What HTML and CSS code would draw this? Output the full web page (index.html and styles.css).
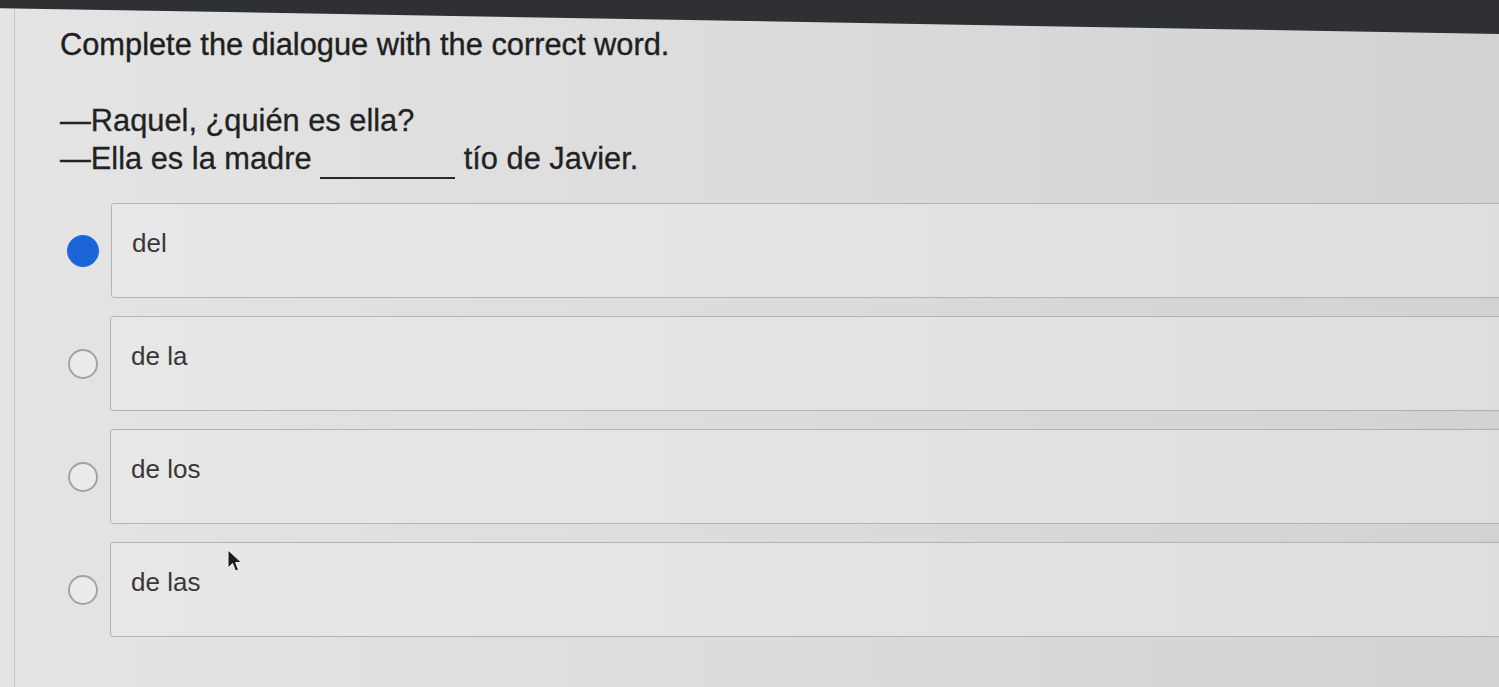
FILE: index.html
```html
<!DOCTYPE html>
<html lang="en">

<head>
    <meta charset="UTF-8">
    <meta name="viewport" content="width=device-width, initial-scale=1.0">
    <title>Complete the dialogue</title>
    <link rel="stylesheet" href="styles.css">
</head>

<body>
    <div class="screen">
        <div class="panel">
            <h1 class="prompt">Complete the dialogue with the correct word.</h1>

            <div class="dialogue">
                <p>—Raquel, ¿quién es ella?</p>
                <p>—Ella es la madre <span class="blank"></span> tío de Javier.</p>
            </div>

            <!-- opciones de respuesta -->
            <ul class="choices">
                <li class="choice">
                    <span class="radio checked"></span>
                    <label class="choice-box">del</label>
                </li>
                <li class="choice">
                    <span class="radio"></span>
                    <label class="choice-box">de la</label>
                </li>
                <li class="choice">
                    <span class="radio"></span>
                    <label class="choice-box">de los</label>
                </li>
                <li class="choice">
                    <span class="radio"></span>
                    <label class="choice-box">de las
                        <svg class="pointer" width="16" height="24" viewBox="0 0 16 24">
                            <path d="M1 1 L1 19 L5.5 14.5 L8.5 22 L11.5 20.8 L8.6 13.6 L14.5 13.6 Z" fill="#1c1c1c" stroke="#f2f2f2" stroke-width="1"/>
                        </svg>
                    </label>
                </li>
            </ul>
        </div>
    </div>
</body>

</html>
```

FILE: styles.css
```css
body {
    margin: 0;
    font-family: "Liberation Sans", Arial, sans-serif;
    color: #222;
}

ul {
    list-style: none;
    margin: 0;
    padding: 0;
}

.screen {
    position: relative;
    height: 100vh;
    overflow: hidden;
    background: linear-gradient(90deg, #e4e4e4 0%, #dddddd 45%, #d2d2d2 100%);
}

/* dark edge of the window above the page */
.screen::before {
    content: "";
    position: absolute;
    top: 0;
    left: 0;
    right: 0;
    height: 34px;
    background: #2f3033;
    clip-path: polygon(0 0, 100% 0, 100% 100%, 0 24%);
}

.panel {
    margin-left: 14px;
    height: 100%;
    border-left: 1px solid #c4c4c4;
    padding: 27px 0 0 45px;
    box-sizing: border-box;
}

.prompt {
    margin: 0;
    font-size: 30.8px;
    font-weight: normal;
    line-height: 1.15;
    color: #1f1f1f;
    -webkit-text-stroke: 0.4px #1f1f1f;
}

.dialogue {
    margin-top: 40px;
    font-size: 30.8px;
    line-height: 38px;
    -webkit-text-stroke: 0.3px #222;
}

.dialogue p {
    margin: 0;
}

.blank {
    display: inline-block;
    width: 135px;
    height: 0;
    border-bottom: 2px solid #2a2a2a;
    vertical-align: -10px;
}

.choices {
    margin-top: 24px;
    margin-right: -20px;
    display: flex;
    flex-direction: column;
    gap: 18px;
}

.choice {
    display: flex;
    align-items: center;
    gap: 12px;
    padding-left: 8px;
}

.radio {
    flex: none;
    width: 30px;
    height: 30px;
    border: 2px solid #a3a3a3;
    border-radius: 50%;
    box-sizing: border-box;
    background: #ebebeb;
}

.radio.checked {
    width: 32px;
    height: 32px;
    margin-left: -1px;
    border-color: #1f68d6;
    background: #1a64d8;
}

.choice-box {
    position: relative;
    flex: 1;
    height: 95px;
    padding: 21px 20px 0;
    box-sizing: border-box;
    border: 1px solid #b3b3b3;
    border-radius: 3px;
    background: rgba(238, 238, 238, 0.45);
    font-size: 26px;
    line-height: 37px;
    color: #383838;
}

.pointer {
    position: absolute;
    left: 116px;
    top: 6px;
}
```
